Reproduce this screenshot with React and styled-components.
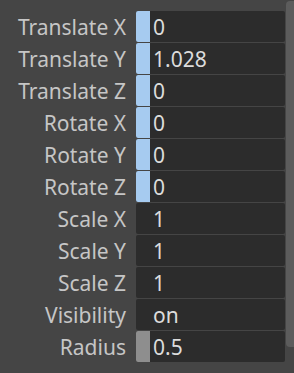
import React from "react";
import styled, { createGlobalStyle } from "styled-components";

const Global = createGlobalStyle`
  html, body { margin: 0; padding: 0; background: #454545; }
  body { width: 294px; height: 373px; overflow: hidden; }
`;

const Page = styled.div`
  display: flex;
  width: 294px;
  height: 373px;
  background: #454545;
  font-family: "Noto Sans", "Open Sans", sans-serif;
`;

const Panel = styled.div`
  flex: 1;
  display: grid;
  grid-template-columns: 126px 149px;
  column-gap: 10px;
  row-gap: 1px;
  grid-auto-rows: 31px;
  padding-top: 11px;
  align-content: start;
`;

const Label = styled.div`
  color: #c6c6c6;
  font-size: 21px;
  text-align: right;
  line-height: 32px;
  white-space: nowrap;
`;

const Field = styled.div`
  display: flex;
  align-items: center;
  background: #2c2c2c;
  border-radius: 2px;
  overflow: hidden;
`;

const Accent = styled.div`
  width: 14px;
  align-self: stretch;
  background: ${(p) => p.$color || "transparent"};
`;

const Value = styled.span`
  color: #dcdcdc;
  font-size: 21px;
  padding-left: 3px;
  line-height: 32px;
`;

const Track = styled.div`
  width: 8px;
  padding-top: 1px;
  display: flex;
  flex-direction: column;
`;

const Thumb = styled.div`
  height: 346px;
  background: #5c5c5c;
  border-radius: 4px 0 0 4px;
`;

const rows = [
  ["Translate X", "0", "#a6cbf0"],
  ["Translate Y", "1.028", "#a6cbf0"],
  ["Translate Z", "0", "#a6cbf0"],
  ["Rotate X", "0", "#a6cbf0"],
  ["Rotate Y", "0", "#a6cbf0"],
  ["Rotate Z", "0", "#a6cbf0"],
  ["Scale X", "1"],
  ["Scale Y", "1"],
  ["Scale Z", "1"],
  ["Visibility", "on"],
  ["Radius", "0.5", "#8e8e8e"],
];

export default function App() {
  return (
    <>
      <Global />
      <Page>
        <Panel>
          {rows.map(([label, value, color]) => (
            <React.Fragment key={label}>
              <Label>{label}</Label>
              <Field>
                <Accent $color={color} />
                <Value>{value}</Value>
              </Field>
            </React.Fragment>
          ))}
        </Panel>
        <Track>
          <Thumb />
        </Track>
      </Page>
    </>
  );
}
